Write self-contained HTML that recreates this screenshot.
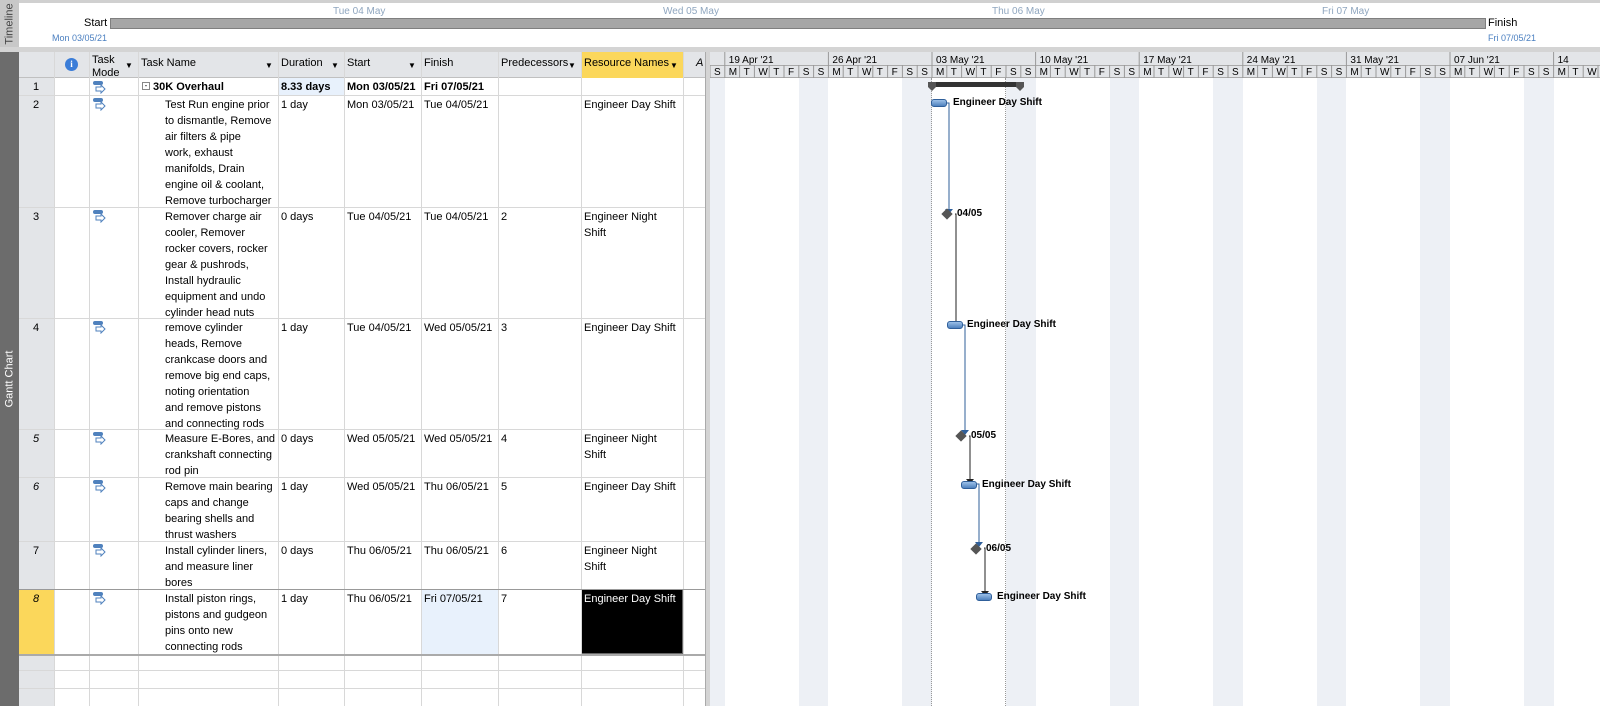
<!DOCTYPE html>
<html><head><meta charset="utf-8"><style>
*{margin:0;padding:0;box-sizing:border-box}
body{width:1600px;height:706px;overflow:hidden;background:#fff;font-family:"Liberation Sans",sans-serif;font-size:11px;color:#000;position:relative}
.a{position:absolute}
.t{position:absolute;white-space:nowrap;line-height:16px}
.vl{position:absolute;width:1px;background:#d8d8d8}
.hl{position:absolute;height:1px;background:#d8d8d8}
.bar{position:absolute;height:8px;background:linear-gradient(#9cc0e8,#4f81bd);border:1px solid #2f5f9a;border-radius:3px}
.ms{position:absolute;width:8px;height:8px;background:#555;transform:rotate(45deg)}
.lbl{position:absolute;font-weight:bold;font-size:10px;white-space:nowrap;line-height:14px}
.wk{position:absolute;top:78px;height:628px;background:#edf0f5}
</style></head><body>
<!-- timeline -->
<div class="a" style="left:0;top:0;width:19px;height:48px;background:#c8c8c8"></div>
<div class="a" style="left:0;top:0;width:19px;height:48px;display:flex;align-items:center;justify-content:center"><span style="transform:rotate(-90deg);font-size:11px;color:#444">Timeline</span></div>
<div class="a" style="left:19px;top:0;width:1581px;height:3px;background:#d0d0d0"></div>
<div class="a" style="left:110px;top:18px;width:1376px;height:11px;background:#a6a6a6;border:1px solid #7f7f7f"></div>
<div class="t" style="left:84px;top:15px;font-size:11px">Start</div>
<div class="t" style="left:1488px;top:15px;font-size:11px">Finish</div>
<div class="t" style="left:52px;top:30px;font-size:9px;color:#4a7fc0">Mon 03/05/21</div>
<div class="t" style="left:1488px;top:30px;font-size:9px;color:#4a7fc0">Fri 07/05/21</div>
<div class="t" style="left:333px;top:4px;font-size:10px;color:#8fa6bf">Tue 04 May</div>
<div class="t" style="left:663px;top:4px;font-size:10px;color:#8fa6bf">Wed 05 May</div>
<div class="t" style="left:992px;top:4px;font-size:10px;color:#8fa6bf">Thu 06 May</div>
<div class="t" style="left:1322px;top:4px;font-size:10px;color:#8fa6bf">Fri 07 May</div>
<div class="a" style="left:0;top:47px;width:1600px;height:5px;background:#d4d4d4"></div>
<!-- left strip -->
<div class="a" style="left:0;top:52px;width:19px;height:654px;background:#6c6c6c;display:flex;align-items:center;justify-content:center"><span style="transform:rotate(-90deg);font-size:11px;color:#fff;white-space:nowrap">Gantt Chart</span></div>
<!-- table header -->
<div class="a" style="left:19px;top:52px;width:686px;height:26px;background:#e3e5e8;border-bottom:1px solid #c0c0c0"></div>
<div class="a" style="left:581px;top:52px;width:102px;height:26px;background:#fbd75b"></div>
<div class="a" style="left:19px;top:78px;width:35px;height:628px;background:#e3e5e8"></div>
<div class="a" style="left:19px;top:589px;width:35px;height:65px;background:#fbd75b"></div>
<div class="a" style="left:278px;top:78px;width:66px;height:17px;background:#e8f1fc"></div>
<div class="a" style="left:421px;top:589px;width:77px;height:65px;background:#e8f1fc"></div>
<div class="a" style="left:581px;top:589px;width:102px;height:65px;background:#000;border:1px solid #666"></div>
<div class="a" style="left:65px;top:58px;width:13px;height:13px;border-radius:50%;background:#3b7dd8;color:#fff;font-size:9px;font-weight:bold;text-align:center;line-height:13px;font-family:'Liberation Serif',serif">i</div>
<div class="t" style="left:92px;top:54px;line-height:13px">Task<br>Mode</div>
<div class="t" style="left:141px;top:55px">Task Name</div>
<div class="t" style="left:281px;top:55px">Duration</div>
<div class="t" style="left:347px;top:55px">Start</div>
<div class="t" style="left:424px;top:55px">Finish</div>
<div class="t" style="left:501px;top:55px">Predecessors</div>
<div class="t" style="left:584px;top:55px">Resource Names</div>
<div class="t" style="left:696px;top:55px;font-style:italic">A</div>
<div class="t" style="left:125px;top:58px;font-size:8px">▼</div>
<div class="t" style="left:265px;top:58px;font-size:8px">▼</div>
<div class="t" style="left:331px;top:58px;font-size:8px">▼</div>
<div class="t" style="left:408px;top:58px;font-size:8px">▼</div>
<div class="t" style="left:568px;top:58px;font-size:8px">▼</div>
<div class="t" style="left:670px;top:58px;font-size:8px">▼</div>
<!-- vertical grid lines -->
<div class="vl" style="left:54px;top:52px;height:654px"></div>
<div class="vl" style="left:89px;top:52px;height:654px"></div>
<div class="vl" style="left:138px;top:52px;height:654px"></div>
<div class="vl" style="left:278px;top:52px;height:654px"></div>
<div class="vl" style="left:344px;top:52px;height:654px"></div>
<div class="vl" style="left:421px;top:52px;height:654px"></div>
<div class="vl" style="left:498px;top:52px;height:654px"></div>
<div class="vl" style="left:581px;top:52px;height:654px"></div>
<div class="vl" style="left:683px;top:52px;height:654px"></div>
<!-- horizontal lines -->
<div class="hl" style="left:19px;top:95px;width:686px"></div>
<div class="hl" style="left:19px;top:207px;width:686px"></div>
<div class="hl" style="left:19px;top:318px;width:686px"></div>
<div class="hl" style="left:19px;top:429px;width:686px"></div>
<div class="hl" style="left:19px;top:477px;width:686px"></div>
<div class="hl" style="left:19px;top:541px;width:686px"></div>
<div class="hl" style="left:19px;top:589px;width:686px;background:#999"></div>
<div class="hl" style="left:19px;top:654px;width:686px;height:2px;background:#aaa"></div>
<div class="hl" style="left:19px;top:670px;width:686px"></div>
<div class="hl" style="left:19px;top:688px;width:686px"></div>
<!-- splitter -->
<div class="a" style="left:705px;top:52px;width:5px;height:654px;background:#d4d4d4;border-left:1px solid #aaa"></div>
<!-- row numbers -->
<div class="t" style="left:33px;top:79px">1</div>
<div class="t" style="left:33px;top:97px">2</div>
<div class="t" style="left:33px;top:209px">3</div>
<div class="t" style="left:33px;top:320px">4</div>
<div class="t" style="left:33px;top:431px;font-style:italic">5</div>
<div class="t" style="left:33px;top:479px;font-style:italic">6</div>
<div class="t" style="left:33px;top:543px">7</div>
<div class="t" style="left:33px;top:591px;font-style:italic">8</div>
<!-- row 1 -->
<div class="a" style="left:142px;top:82px;width:8px;height:8px;border:1px solid #888;font-size:8px;line-height:6px;text-align:center">-</div>
<div class="t" style="left:153px;top:79px;font-weight:bold">30K Overhaul</div>
<div class="t" style="left:281px;top:79px;font-weight:bold">8.33 days</div>
<div class="t" style="left:347px;top:79px;font-weight:bold">Mon 03/05/21</div>
<div class="t" style="left:424px;top:79px;font-weight:bold">Fri 07/05/21</div>
<!-- rows -->
<div class="t" style="left:165px;top:97px">Test Run engine prior<br>to dismantle, Remove<br>air filters &amp; pipe<br>work, exhaust<br>manifolds, Drain<br>engine oil &amp; coolant,<br>Remove turbocharger</div>
<div class="t" style="left:281px;top:97px">1 day</div><div class="t" style="left:347px;top:97px">Mon 03/05/21</div><div class="t" style="left:424px;top:97px">Tue 04/05/21</div><div class="t" style="left:584px;top:97px">Engineer Day Shift</div>

<div class="t" style="left:165px;top:209px">Remover charge air<br>cooler, Remover<br>rocker covers, rocker<br>gear &amp; pushrods,<br>Install hydraulic<br>equipment and undo<br>cylinder head nuts</div>
<div class="t" style="left:281px;top:209px">0 days</div><div class="t" style="left:347px;top:209px">Tue 04/05/21</div><div class="t" style="left:424px;top:209px">Tue 04/05/21</div><div class="t" style="left:501px;top:209px">2</div><div class="t" style="left:584px;top:209px">Engineer Night<br>Shift</div>

<div class="t" style="left:165px;top:320px">remove cylinder<br>heads, Remove<br>crankcase doors and<br>remove big end caps,<br>noting orientation<br>and remove pistons<br>and connecting rods</div>
<div class="t" style="left:281px;top:320px">1 day</div><div class="t" style="left:347px;top:320px">Tue 04/05/21</div><div class="t" style="left:424px;top:320px">Wed 05/05/21</div><div class="t" style="left:501px;top:320px">3</div><div class="t" style="left:584px;top:320px">Engineer Day Shift</div>

<div class="t" style="left:165px;top:431px">Measure E-Bores, and<br>crankshaft connecting<br>rod pin</div>
<div class="t" style="left:281px;top:431px">0 days</div><div class="t" style="left:347px;top:431px">Wed 05/05/21</div><div class="t" style="left:424px;top:431px">Wed 05/05/21</div><div class="t" style="left:501px;top:431px">4</div><div class="t" style="left:584px;top:431px">Engineer Night<br>Shift</div>

<div class="t" style="left:165px;top:479px">Remove main bearing<br>caps and change<br>bearing shells and<br>thrust washers</div>
<div class="t" style="left:281px;top:479px">1 day</div><div class="t" style="left:347px;top:479px">Wed 05/05/21</div><div class="t" style="left:424px;top:479px">Thu 06/05/21</div><div class="t" style="left:501px;top:479px">5</div><div class="t" style="left:584px;top:479px">Engineer Day Shift</div>

<div class="t" style="left:165px;top:543px">Install cylinder liners,<br>and measure liner<br>bores</div>
<div class="t" style="left:281px;top:543px">0 days</div><div class="t" style="left:347px;top:543px">Thu 06/05/21</div><div class="t" style="left:424px;top:543px">Thu 06/05/21</div><div class="t" style="left:501px;top:543px">6</div><div class="t" style="left:584px;top:543px">Engineer Night<br>Shift</div>

<div class="t" style="left:165px;top:591px">Install piston rings,<br>pistons and gudgeon<br>pins onto new<br>connecting rods</div>
<div class="t" style="left:281px;top:591px">1 day</div><div class="t" style="left:347px;top:591px">Thu 06/05/21</div><div class="t" style="left:424px;top:591px">Fri 07/05/21</div><div class="t" style="left:501px;top:591px">7</div><div class="t" style="left:584px;top:591px;color:#fff">Engineer Day Shift</div>

<!-- mode icons -->
<svg class="a" style="left:92px;top:80px" width="16" height="14"><rect x="1" y="1" width="10" height="4" rx="2" fill="#4f81bd"/><path d="M4 7h5V5l4 4-4 4v-2H4z" fill="#fff" stroke="#4f81bd"/></svg>
<svg class="a" style="left:92px;top:97px" width="16" height="14"><rect x="1" y="1" width="10" height="4" rx="2" fill="#4f81bd"/><path d="M4 7h5V5l4 4-4 4v-2H4z" fill="#fff" stroke="#4f81bd"/></svg>
<svg class="a" style="left:92px;top:209px" width="16" height="14"><rect x="1" y="1" width="10" height="4" rx="2" fill="#4f81bd"/><path d="M4 7h5V5l4 4-4 4v-2H4z" fill="#fff" stroke="#4f81bd"/></svg>
<svg class="a" style="left:92px;top:320px" width="16" height="14"><rect x="1" y="1" width="10" height="4" rx="2" fill="#4f81bd"/><path d="M4 7h5V5l4 4-4 4v-2H4z" fill="#fff" stroke="#4f81bd"/></svg>
<svg class="a" style="left:92px;top:431px" width="16" height="14"><rect x="1" y="1" width="10" height="4" rx="2" fill="#4f81bd"/><path d="M4 7h5V5l4 4-4 4v-2H4z" fill="#fff" stroke="#4f81bd"/></svg>
<svg class="a" style="left:92px;top:479px" width="16" height="14"><rect x="1" y="1" width="10" height="4" rx="2" fill="#4f81bd"/><path d="M4 7h5V5l4 4-4 4v-2H4z" fill="#fff" stroke="#4f81bd"/></svg>
<svg class="a" style="left:92px;top:543px" width="16" height="14"><rect x="1" y="1" width="10" height="4" rx="2" fill="#4f81bd"/><path d="M4 7h5V5l4 4-4 4v-2H4z" fill="#fff" stroke="#4f81bd"/></svg>
<svg class="a" style="left:92px;top:591px" width="16" height="14"><rect x="1" y="1" width="10" height="4" rx="2" fill="#4f81bd"/><path d="M4 7h5V5l4 4-4 4v-2H4z" fill="#fff" stroke="#4f81bd"/></svg>

<!-- gantt -->
<div id="wkends"></div>
<div class="a" style="left:710px;top:52px;width:890px;height:26px;background:#e3e5e8;border-bottom:1px solid #aaa"></div>
<div class="a" style="left:710px;top:65px;width:890px;height:1px;background:#aaa"></div>
<svg class="a" style="left:710px;top:52px" width="890" height="26" font-family="Liberation Sans" font-size="10">
<g id="days"></g>
</svg>
<div class="a" style="left:931px;top:78px;width:0;height:628px;border-left:1px dotted #999"></div>
<div class="a" style="left:1005px;top:78px;width:0;height:628px;border-left:1px dotted #999"></div>
<!-- summary -->
<div class="a" style="left:929px;top:82px;width:94px;height:5px;background:#333"></div>
<svg class="a" style="left:926px;top:82px" width="100" height="10"><path d="M2 0h8v5l-4 4-4-4z M90 0h8v5l-4 4-4-4z" fill="#555"/></svg>
<!-- links -->
<svg class="a" style="left:710px;top:78px" width="890" height="628" fill="none">
<path d="M236 25h3v108" stroke="#2f5f9a"/><path d="M235 131l4 5 4-5z" fill="#2f5f9a"/>
<path d="M245 136h1v110" stroke="#222"/><path d="M242 243l4 5 4-5z" fill="#222"/>
<path d="M252 247h3v107" stroke="#2f5f9a"/><path d="M251 352l4 5 4-5z" fill="#2f5f9a"/>
<path d="M259 358h1v45" stroke="#222"/><path d="M256 401l4 5 4-5z" fill="#222"/>
<path d="M266 406h3v60" stroke="#2f5f9a"/><path d="M265 464l4 5 4-5z" fill="#2f5f9a"/>
<path d="M274 470h1v45" stroke="#222"/><path d="M271 513l4 5 4-5z" fill="#222"/>
</svg>
<div class="bar" style="left:931px;top:99px;width:16px"></div><div class="lbl" style="left:953px;top:96px">Engineer Day Shift</div>
<div class="ms" style="left:943px;top:210px"></div><div class="lbl" style="left:957px;top:207px">04/05</div>
<div class="bar" style="left:947px;top:321px;width:16px"></div><div class="lbl" style="left:967px;top:318px">Engineer Day Shift</div>
<div class="ms" style="left:957px;top:432px"></div><div class="lbl" style="left:971px;top:429px">05/05</div>
<div class="bar" style="left:961px;top:481px;width:16px"></div><div class="lbl" style="left:982px;top:478px">Engineer Day Shift</div>
<div class="ms" style="left:972px;top:545px"></div><div class="lbl" style="left:986px;top:542px">06/05</div>
<div class="bar" style="left:976px;top:593px;width:16px"></div><div class="lbl" style="left:997px;top:590px">Engineer Day Shift</div>
<script>
var s='',d='',L='SMTWTFS',D=14.8,O=710;
var W=['19 Apr \'21','26 Apr \'21','03 May \'21','10 May \'21','17 May \'21','24 May \'21','31 May \'21','07 Jun \'21','14'];
for(var i=0;i<61;i++){var x=i*D;d+='<line x1="'+x.toFixed(1)+'" y1="13" x2="'+x.toFixed(1)+'" y2="26" stroke="#999"/><text x="'+(x+4).toFixed(1)+'" y="23">'+L[i%7]+'</text>';
 if(i%7==0||i%7==6){s+='<div class="wk" style="left:'+(O+x).toFixed(1)+'px;width:'+D+'px"></div>';}}
for(var k=0;k<9;k++){var x=D+k*7*D;d+='<line x1="'+x.toFixed(1)+'" y1="0" x2="'+x.toFixed(1)+'" y2="13" stroke="#999"/><text x="'+(x+4).toFixed(1)+'" y="11">'+W[k]+'</text>';}
document.getElementById('days').innerHTML=d;
document.getElementById('wkends').innerHTML=s;
</script>
</body></html>
